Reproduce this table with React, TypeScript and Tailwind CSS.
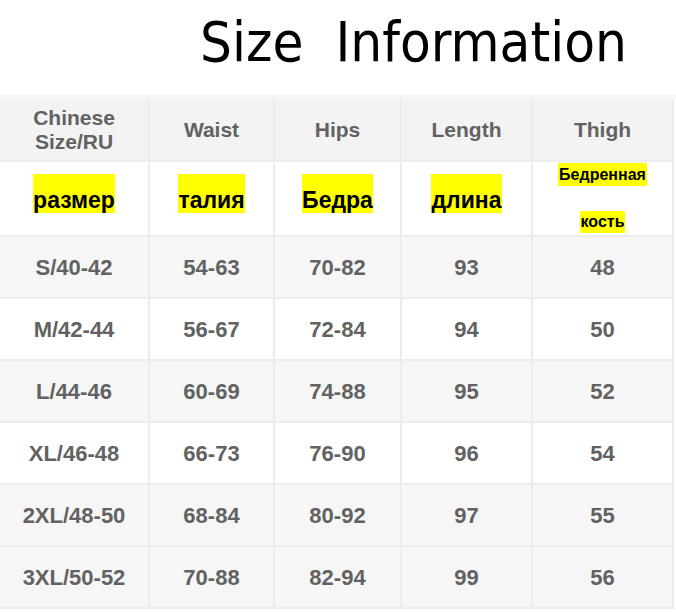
const rows = [
  ["S/40-42", "54-63", "70-82", "93", "48"],
  ["M/42-44", "56-67", "72-84", "94", "50"],
  ["L/44-46", "60-69", "74-88", "95", "52"],
  ["XL/46-48", "66-73", "76-90", "96", "54"],
  ["2XL/48-50", "68-84", "80-92", "97", "55"],
  ["3XL/50-52", "70-88", "82-94", "99", "56"],
];

const rowBg = ["bg-[#f6f6f6]", "bg-white", "bg-[#f6f6f6]", "bg-white", "bg-[#f6f6f6]", "bg-[#f6f6f6]"];

const cell = "flex items-center justify-center border-r-2 border-b-2 border-[#ececec] text-center";

function Mark({ children }: { children: React.ReactNode }) {
  return (
    <span className="inline-block bg-[#ffff00] pt-[14px] leading-[25px] text-[23px] font-bold text-black">
      {children}
    </span>
  );
}

export default function App() {
  return (
    <div className="w-[676px] h-[612px] bg-white overflow-hidden font-['Liberation_Sans',Arial,sans-serif]">
      {/* Title */}
      <div className="h-[95px] pt-[14px] pl-[200px]">
        <h1 className="font-['DejaVu_Sans_Condensed','DejaVu_Sans',sans-serif] [font-stretch:condensed] text-[56px] leading-none font-normal text-black whitespace-pre">
          Size  Information
        </h1>
      </div>
      <div className="h-[4px] bg-[#f4f6fb]" />

      {/* Table */}
      <div className="grid w-[674px] grid-cols-[150px_125px_127px_131px_141px] text-[#626262] font-bold">
        {/* header */}
        <div className={`${cell} h-[63px] bg-[#f3f3f3] flex-col text-[21px] leading-[24px] pt-[1px]`}>
          <span>Chinese</span>
          <span>Size/RU</span>
        </div>
        {["Waist", "Hips", "Length", "Thigh"].map((h) => (
          <div key={h} className={`${cell} h-[63px] bg-[#f3f3f3] text-[21px]`}>
            {h}
          </div>
        ))}

        {/* russian labels */}
        {["размер", "талия", "Бедра", "длина"].map((t) => (
          <div key={t} className="flex justify-center items-start pt-[12px] h-[75px] bg-white border-r-2 border-b-2 border-[#ececec]">
            <Mark>{t}</Mark>
          </div>
        ))}
        <div className="flex flex-col items-center h-[75px] bg-white border-r-2 border-b-2 border-[#ececec] pt-[1px] gap-[25px]">
          <span className="inline-block bg-[#ffff00] h-[23px] leading-[23px] text-[16px] font-bold text-black px-[1px]">Бедренная</span>
          <span className="inline-block bg-[#ffff00] h-[22px] leading-[22px] text-[16px] font-bold text-black px-[1px]">кость</span>
        </div>

        {/* data */}
        {rows.map((r, i) =>
          r.map((v, j) => (
            <div key={`${i}-${j}`} className={`${cell} h-[62px] ${rowBg[i]} text-[22px]`}>
              {v}
            </div>
          ))
        )}
      </div>
    </div>
  );
}
